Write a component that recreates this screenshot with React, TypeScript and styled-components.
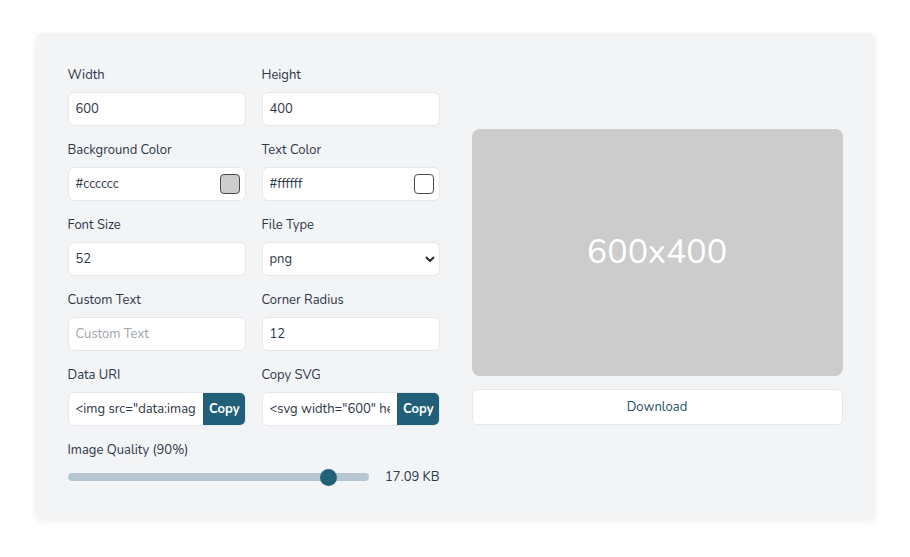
import { useState } from 'react';
import styled, { createGlobalStyle } from 'styled-components';

const GlobalStyle = createGlobalStyle`
  * { box-sizing: border-box; }
  body {
    margin: 0;
    background: #ffffff;
    font-family: 'Nunito', Lato, 'Noto Sans', sans-serif;
    color: #2d3748;
  }
`;

const Page = styled.div`
  padding: 33px 0;
`;

const Card = styled.div`
  width: 839px;
  margin: 0 auto;
  background: #f3f4f6;
  border-radius: 6px;
  box-shadow: 0 2px 6px rgba(0, 0, 0, 0.08);
  padding: 33px 32px 32px;
  display: flex;
  align-items: center;
  gap: 32px;
`;

const Form = styled.div`
  width: 372px;
  flex-shrink: 0;
  display: flex;
  flex-direction: column;
  gap: 15px;
`;

const Row = styled.div`
  display: grid;
  grid-template-columns: minmax(0, 1fr) minmax(0, 1fr);
  column-gap: 16px;
`;

const Field = styled.div`
  display: flex;
  flex-direction: column;
  gap: 8px;
  min-width: 0;
`;

const Label = styled.label`
  font-size: 13px;
  line-height: 18px;
  color: #2d3748;
`;

const Box = styled.div`
  position: relative;
  height: 34px;
  background: #ffffff;
  border: 1px solid #e5e7eb;
  border-radius: 6px;
  display: flex;
  align-items: center;
  overflow: hidden;
`;

const TextInput = styled.input`
  flex: 1;
  min-width: 0;
  width: 0;
  height: 100%;
  border: none;
  outline: none;
  background: transparent;
  padding: 0 7px;
  font: inherit;
  font-size: 13px;
  color: #2d3748;
  &::placeholder { color: #a0a4ab; }
`;

const Swatch = styled.span<{ $color: string }>`
  width: 20px;
  height: 20px;
  margin-right: 5px;
  border-radius: 4px;
  border: 1px solid #4a4a4a;
  background: ${(p) => p.$color};
  flex-shrink: 0;
`;

const Select = styled.select`
  appearance: none;
  flex: 1;
  min-width: 0;
  height: 100%;
  border: none;
  outline: none;
  background: transparent;
  padding: 0 7px;
  font: inherit;
  font-size: 13px;
  color: #2d3748;
`;

const Chevron = styled.svg`
  position: absolute;
  right: 4px;
  top: 50%;
  margin-top: -3px;
  pointer-events: none;
`;

const CopyButton = styled.button`
  height: 34px;
  flex-shrink: 0;
  margin: -1px -1px -1px 0;
  padding: 0 6px;
  border: none;
  border-radius: 0 6px 6px 0;
  background: #22607a;
  color: #ffffff;
  font: inherit;
  font-size: 13px;
  font-weight: 700;
  cursor: pointer;
`;

const SliderRow = styled.div`
  display: flex;
  align-items: center;
  gap: 16px;
  height: 20px;
`;

const Range = styled.input`
  appearance: none;
  -webkit-appearance: none;
  width: 302px;
  height: 8px;
  margin: 0;
  border-radius: 4px;
  background: #b6c6d0;
  outline: none;
  &::-webkit-slider-thumb {
    -webkit-appearance: none;
    width: 17px;
    height: 17px;
    border-radius: 50%;
    background: #22607a;
    border: none;
    cursor: pointer;
  }
  &::-moz-range-thumb {
    width: 17px;
    height: 17px;
    border-radius: 50%;
    background: #22607a;
    border: none;
  }
`;

const Size = styled.span`
  font-size: 13px;
  color: #2d3748;
  margin-left: auto;
  white-space: nowrap;
`;

const Preview = styled.div`
  flex: 1;
  display: flex;
  flex-direction: column;
  gap: 13px;
`;

const Placeholder = styled.div<{ $bg: string; $fg: string; $radius: number }>`
  height: 247px;
  border-radius: ${(p) => p.$radius * 0.66}px;
  background: ${(p) => p.$bg};
  color: ${(p) => p.$fg};
  display: flex;
  align-items: center;
  justify-content: center;
  font-size: 34px;
`;

const DownloadButton = styled.button`
  height: 36px;
  border: 1px solid #e5e7eb;
  border-radius: 5px;
  background: #ffffff;
  color: #1e4f66;
  font: inherit;
  font-size: 13px;
  cursor: pointer;
`;

export default function App() {
  const [quality, setQuality] = useState(90);
  const width = 600;
  const height = 400;

  return (
    <Page>
      <GlobalStyle />
      <Card>
        <Form>
          <Row>
            <Field>
              <Label>Width</Label>
              <Box><TextInput defaultValue="600" /></Box>
            </Field>
            <Field>
              <Label>Height</Label>
              <Box><TextInput defaultValue="400" /></Box>
            </Field>
          </Row>
          <Row>
            <Field>
              <Label>Background Color</Label>
              <Box>
                <TextInput defaultValue="#cccccc" />
                <Swatch $color="#cccccc" />
              </Box>
            </Field>
            <Field>
              <Label>Text Color</Label>
              <Box>
                <TextInput defaultValue="#ffffff" />
                <Swatch $color="#ffffff" />
              </Box>
            </Field>
          </Row>
          <Row>
            <Field>
              <Label>Font Size</Label>
              <Box><TextInput defaultValue="52" /></Box>
            </Field>
            <Field>
              <Label>File Type</Label>
              <Box>
                <Select defaultValue="png">
                  <option value="png">png</option>
                  <option value="jpeg">jpeg</option>
                  <option value="webp">webp</option>
                </Select>
                <Chevron width="10" height="7" viewBox="0 0 10 7">
                  <path d="M1.5 1.5 5 5l3.5-3.5" fill="none" stroke="#2d2d3a" strokeWidth="2" strokeLinecap="round" strokeLinejoin="round" />
                </Chevron>
              </Box>
            </Field>
          </Row>
          <Row>
            <Field>
              <Label>Custom Text</Label>
              <Box><TextInput placeholder="Custom Text" /></Box>
            </Field>
            <Field>
              <Label>Corner Radius</Label>
              <Box><TextInput defaultValue="12" /></Box>
            </Field>
          </Row>
          <Row>
            <Field>
              <Label>Data URI</Label>
              <Box>
                <TextInput readOnly value={'<img src="data:image/png;base64,iVBORw0KGgo" />'} />
                <CopyButton>Copy</CopyButton>
              </Box>
            </Field>
            <Field>
              <Label>Copy SVG</Label>
              <Box>
                <TextInput readOnly value={'<svg width="600" height="400" xmlns="http://www.w3.org/2000/svg">'} />
                <CopyButton>Copy</CopyButton>
              </Box>
            </Field>
          </Row>
          <Field>
            <Label>Image Quality ({quality}%)</Label>
            <SliderRow>
              <Range
                type="range"
                min={10}
                max={100}
                value={quality}
                onChange={(e) => setQuality(Number(e.target.value))}
              />
              <Size>17.09 KB</Size>
            </SliderRow>
          </Field>
        </Form>
        <Preview>
          <Placeholder $bg="#cccccc" $fg="#ffffff" $radius={12}>
            {width}x{height}
          </Placeholder>
          <DownloadButton>Download</DownloadButton>
        </Preview>
      </Card>
    </Page>
  );
}
